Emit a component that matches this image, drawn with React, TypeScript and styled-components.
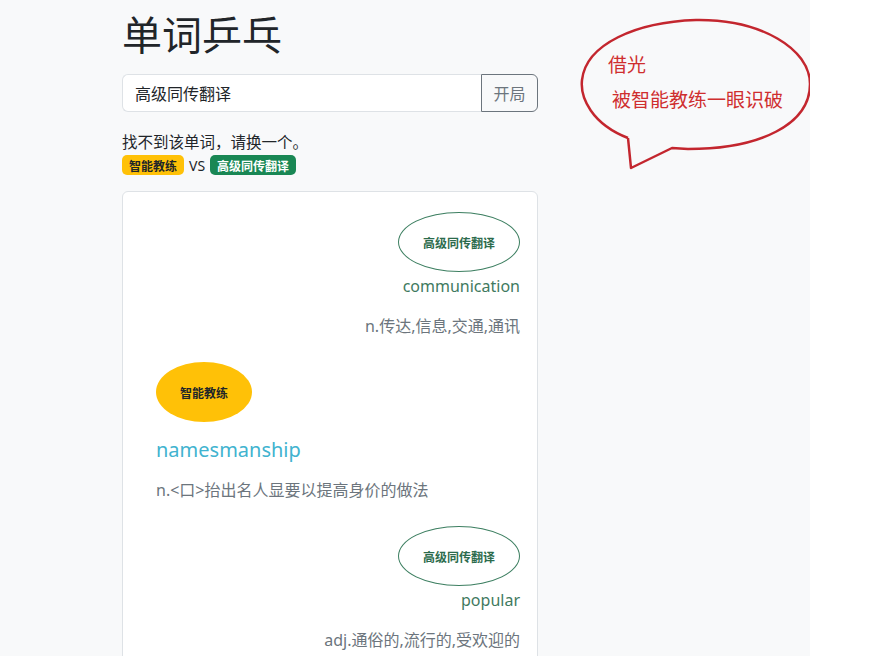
import { FC } from 'react'
import styled, { createGlobalStyle } from 'styled-components'

const GlobalStyle = createGlobalStyle`
  html, body {
    margin: 0;
    padding: 0;
    background: #ffffff;
  }
  body {
    font-family: "Noto Sans", "Noto Sans CJK SC", sans-serif;
    color: #212529;
  }
`

const Page = styled.div`
  position: relative;
  width: 810px;
  min-height: 100vh;
  background: #f8f9fa;
  overflow: hidden;
`

const Container = styled.div`
  width: 416px;
  margin-left: 122px;
  display: flex;
  flex-direction: column;
`

const Title = styled.h1`
  margin: 9px 0 17px;
  font-size: 40px;
  line-height: 48px;
  font-weight: 400;
  font-family: "Noto Sans CJK SC", sans-serif;
`

const InputGroup = styled.div`
  display: flex;
  height: 38px;
`

const SearchInput = styled.div`
  flex: 1;
  display: flex;
  align-items: center;
  padding: 0 12px;
  background: #fff;
  border: 1px solid #dee2e6;
  border-right: none;
  border-radius: 6px 0 0 6px;
  font-size: 16px;
  font-family: "Noto Sans CJK SC", sans-serif;
`

const StartButton = styled.button`
  width: 57px;
  border: 1px solid #6c757d;
  border-radius: 0 6px 6px 0;
  background: transparent;
  color: #6c757d;
  font-size: 16px;
  font-family: "Noto Sans CJK SC", sans-serif;
  padding: 0;
`

const Message = styled.p`
  margin: 18px 0 0;
  font-size: 15.5px;
  line-height: 22px;
  font-family: "Noto Sans CJK SC", sans-serif;
`

const VsRow = styled.div`
  display: flex;
  align-items: center;
  gap: 5px;
  margin-top: 3px;
  font-size: 14px;
`

const Badge = styled.span<{ $tone: 'coach' | 'pro' }>`
  display: inline-flex;
  align-items: center;
  height: 20px;
  padding: 0 7px;
  border-radius: 5px;
  font-size: 12px;
  font-weight: 700;
  font-family: "Noto Sans CJK SC", sans-serif;
  background: ${({ $tone }) => ($tone === 'coach' ? '#ffc107' : '#198754')};
  color: ${({ $tone }) => ($tone === 'coach' ? '#212529' : '#ffffff')};
`

const Card = styled.div`
  margin-top: 16px;
  background: #fff;
  border: 1px solid #dee2e6;
  border-radius: 6px;
  padding: 20px 17px 40px;
  min-height: 500px;
`

const Entry = styled.div<{ $side: 'left' | 'right' }>`
  display: flex;
  flex-direction: column;
  align-items: ${({ $side }) => ($side === 'right' ? 'flex-end' : 'flex-start')};
  padding-left: ${({ $side }) => ($side === 'left' ? '16px' : '0')};
  margin-bottom: 25px;
`

const Player = styled.div<{ $side: 'left' | 'right' }>`
  display: flex;
  align-items: center;
  justify-content: center;
  height: 60px;
  width: ${({ $side }) => ($side === 'right' ? '122px' : '96px')};
  border-radius: 50%;
  box-sizing: border-box;
  font-size: 12px;
  font-weight: 700;
  font-family: "Noto Sans CJK SC", sans-serif;
  background: ${({ $side }) => ($side === 'right' ? 'transparent' : '#ffc107')};
  border: ${({ $side }) => ($side === 'right' ? '1px solid #3d7f61' : 'none')};
  color: ${({ $side }) => ($side === 'right' ? '#2c6b4c' : '#212529')};
`

const Word = styled.div<{ $side: 'left' | 'right' }>`
  margin-top: ${({ $side }) => ($side === 'right' ? '2px' : '13px')};
  font-size: ${({ $side }) => ($side === 'right' ? '16px' : '20px')};
  line-height: ${({ $side }) => ($side === 'right' ? '24px' : '30px')};
  color: ${({ $side }) => ($side === 'right' ? '#3f7a5f' : '#41b3cf')};
`

const Meaning = styled.div<{ $side: 'left' | 'right' }>`
  margin-top: ${({ $side }) => ($side === 'right' ? '17px' : '14px')};
  font-size: 16px;
  line-height: 22px;
  color: #6c757d;
  font-family: "Noto Sans", "Noto Sans CJK SC", sans-serif;
`

const Bubble = styled.svg`
  position: absolute;
  left: 576px;
  top: 14px;
  overflow: visible;
`

const BubbleText = styled.div`
  position: absolute;
  left: 608px;
  top: 46px;
  color: #cf2e2e;
  font-size: 19px;
  line-height: 35px;
  font-family: "Noto Sans CJK SC", sans-serif;
`

const BubbleLine = styled.div<{ $indent?: number }>`
  padding-left: ${({ $indent }) => $indent ?? 0}px;
`

interface Turn {
  side: 'left' | 'right'
  player: string
  word: string
  meaning: string
}

const turns: Turn[] = [
  { side: 'right', player: '高级同传翻译', word: 'communication', meaning: 'n.传达,信息,交通,通讯' },
  { side: 'left', player: '智能教练', word: 'namesmanship', meaning: 'n.<口>抬出名人显要以提高身价的做法' },
  { side: 'right', player: '高级同传翻译', word: 'popular', meaning: 'adj.通俗的,流行的,受欢迎的' },
]

const App: FC = () => {
  return (
    <Page>
      <GlobalStyle />
      <Container>
        <Title>单词乒乓</Title>
        <InputGroup>
          <SearchInput>高级同传翻译</SearchInput>
          <StartButton>开局</StartButton>
        </InputGroup>
        <Message>找不到该单词，请换一个。</Message>
        <VsRow>
          <Badge $tone="coach">智能教练</Badge>
          <span>VS</span>
          <Badge $tone="pro">高级同传翻译</Badge>
        </VsRow>
        <Card>
          {turns.map((t, i) => (
            <Entry key={i} $side={t.side}>
              <Player $side={t.side}>{t.player}</Player>
              <Word $side={t.side}>{t.word}</Word>
              <Meaning $side={t.side}>{t.meaning}</Meaning>
            </Entry>
          ))}
        </Card>
      </Container>

      {/* red speech bubble annotation on top of the page */}
      <Bubble width="240" height="160" viewBox="0 0 240 160">
        <path
          d="M52 124 C 16 110, 4 84, 6 66 C 10 30, 60 8, 120 6 C 185 5, 234 35, 234 70 C 234 110, 185 135, 112 135 L 96 134 L 55 154 L 52 124"
          fill="none"
          stroke="#c3262e"
          strokeWidth="2.5"
          strokeLinejoin="round"
        />
      </Bubble>
      <BubbleText>
        <BubbleLine>借光</BubbleLine>
        <BubbleLine $indent={4}>被智能教练一眼识破</BubbleLine>
      </BubbleText>
    </Page>
  )
}

export default App
